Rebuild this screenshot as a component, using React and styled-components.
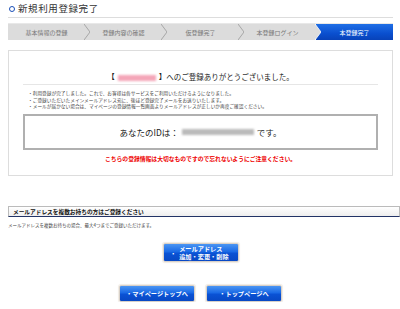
import React from 'react';
import styled, { createGlobalStyle } from 'styled-components';

const GlobalStyle = createGlobalStyle`
  body {
    margin: 0;
    background: #fff;
    font-family: "Noto Sans CJK JP", "DejaVu Sans", sans-serif;
    color: #333;
  }
`;

const Page = styled.div`
  width: 392px;
  padding: 0 0 0 8px;
`;

const Title = styled.h1`
  display: flex;
  align-items: center;
  gap: 3px;
  margin: 0 7px 0 0;
  height: 17px;
  border-bottom: 1px solid #ddd;
  font-size: 9.5px;
  letter-spacing: 0.6px;
  font-weight: normal;
  color: #333;
  line-height: 1;
`;

const Ring = styled.span`
  width: 4px;
  height: 4px;
  border: 1.5px solid #1a4fb8;
  border-radius: 50%;
  margin-left: 1px;
`;

const StepBar = styled.div`
  display: flex;
  height: 16px;
  margin: 5px 7px 0 0;
  background: #dcdcdc;
  border-top: 1px solid #e8e8e8;
`;

const Step = styled.div`
  position: relative;
  flex: 1;
  display: flex;
  align-items: center;
  justify-content: center;
  font-size: 6px;
  color: ${p => (p.$active ? '#fff' : '#777')};
  background: ${p => (p.$active ? 'linear-gradient(#1f6fe6, #0a4fcf 60%, #0842b8)' : 'transparent')};
`;

const Arrow = styled.svg`
  position: absolute;
  right: -5px;
  top: 0;
  z-index: 1;
`;

const Card = styled.div`
  margin: 10px 7px 0 0;
  border: 1px solid #ddd;
  height: 124px;
  padding: 0 14px;
`;

const Heading = styled.div`
  text-align: center;
  font-size: 7.5px;
  color: #222;
  padding-top: 20px;
  height: 13px;
  border-bottom: 1px solid #e6e6e6;
`;

const Blur = styled.span`
  display: inline-block;
  width: ${p => p.$w}px;
  height: 6px;
  vertical-align: middle;
  background: ${p => p.$color};
  filter: blur(1px);
  margin: 0 3px;
`;

const Notes = styled.ul`
  list-style: none;
  margin: 5px 0 0 5px;
  padding: 0;
  font-size: 4.7px;
  line-height: 6.6px;
  color: #444;
`;

const IdBox = styled.div`
  margin-top: 4px;
  height: 32px;
  border: 2px solid #b0b0b0;
  display: flex;
  align-items: center;
  justify-content: center;
  font-size: 8.5px;
  color: #222;
`;

const Warning = styled.p`
  margin: 4px 0 0;
  text-align: center;
  font-size: 5.8px;
  font-weight: bold;
  color: #e00;
`;

const SectionBar = styled.div`
  margin-top: 30px;
  height: 9px;
  display: flex;
  align-items: center;
  padding-left: 4px;
  border: 1px solid #bbb;
  border-bottom: 1px solid #223366;
  background: linear-gradient(#fff, #eee);
  font-size: 5.7px;
  font-weight: bold;
  color: #111;
`;

const SmallNote = styled.p`
  margin: 5px 0 0;
  font-size: 4.5px;
  color: #444;
`;

const Center = styled.div`
  display: flex;
  justify-content: center;
  gap: 11px;
  margin: ${p => p.$mt}px 7px 0 0;
`;

const BlueButton = styled.button`
  width: ${p => p.$w}px;
  height: ${p => p.$h}px;
  padding: 0;
  border: 1px solid #d8d0c8;
  border-radius: 2px;
  box-shadow: 0 0 1px 1px #f0ebe4;
  background: linear-gradient(#4b95f2 0%, #1a6ae6 45%, #0a52d4 55%, #0848c4 100%);
  color: #fff;
  font-family: inherit;
  font-size: 6.2px;
  font-weight: bold;
  line-height: 8px;
  display: flex;
  align-items: center;
  justify-content: center;
  gap: 5px;
`;

const Lines = styled.span`
  display: flex;
  flex-direction: column;
  align-items: flex-start;
  line-height: 7.5px;
`;

const Dot = styled.span`
  font-size: 5px;
`;

const steps = ['基本情報の登録', '登録内容の確認', '仮登録完了', '本登録ログイン', '本登録完了'];

export default function App() {
  return (
    <Page>
      <GlobalStyle />
      <Title>
        <Ring />
        新規利用登録完了
      </Title>
      <StepBar>
        {steps.map((s, i) => (
          <Step key={s} $active={i === steps.length - 1}>
            {s}
            {i < steps.length - 1 && (
              <Arrow width="6" height="16" viewBox="0 0 6 16">
                <polygon points="0,0 6,8 0,16" fill="#dcdcdc" />
                <polyline points="0,0 6,8 0,16" fill="none" stroke={i === steps.length - 2 ? '#fff' : '#999'} strokeWidth="0.8" />
              </Arrow>
            )}
          </Step>
        ))}
      </StepBar>
      <Card>
        <Heading>
          【<Blur $w={38} $color="#f4a6b8" />】へのご登録ありがとうございました。
        </Heading>
        <Notes>
          <li>・利用登録が完了しました。これで、お客様は各サービスをご利用いただけるようになりました。</li>
          <li>・ご登録いただいたメインメールアドレス宛に、後ほど登録完了メールをお送りいたします。</li>
          <li>・メールが届かない場合は、マイページの登録情報一覧画面よりメールアドレスが正しいか再度ご確認ください。</li>
        </Notes>
        <IdBox>
          あなたのIDは：<Blur $w={72} $color="#bbb" />です。
        </IdBox>
        <Warning>こちらの登録情報は大切なものですので忘れないようにご注意ください。</Warning>
      </Card>
      <SectionBar>メールアドレスを複数お持ちの方はご登録ください</SectionBar>
      <SmallNote>メールアドレスを複数お持ちの場合、最大4つまでご登録いただけます。</SmallNote>
      <Center $mt={15}>
        <BlueButton $w={76} $h={19}>
          <Dot>•</Dot>
          <Lines>
            <span>メールアドレス</span>
            <span>追加・変更・削除</span>
          </Lines>
        </BlueButton>
      </Center>
      <Center $mt={23}>
        <BlueButton $w={76} $h={17}>・マイページトップへ</BlueButton>
        <BlueButton $w={76} $h={17}>・トップページへ</BlueButton>
      </Center>
    </Page>
  );
}
